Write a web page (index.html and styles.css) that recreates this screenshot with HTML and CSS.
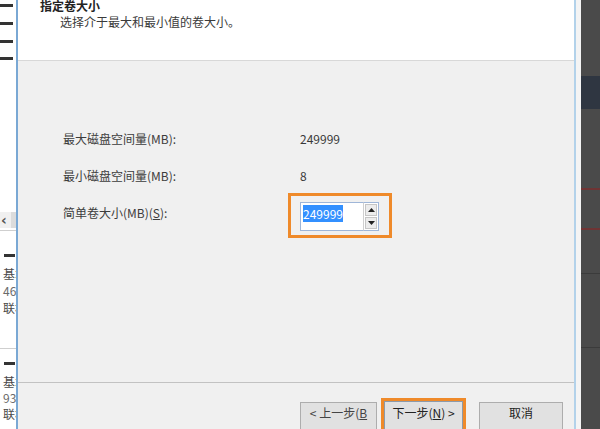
FILE: index.html
```html
<!DOCTYPE html>
<html lang="zh-CN">
<head>
<meta charset="utf-8">
<title>新建简单卷向导</title>
<link rel="stylesheet" href="styles.css">
</head>
<body>
<div class="side">
  <div class="dash d1"></div>
  <div class="dash d2"></div>
  <div class="dash d2"></div>
  <div class="dash d3"></div>
  <div class="scroll"><span class="lt">&lsaquo;</span><span class="thumb"></span></div>
  <div class="hsep s1"></div>
  <div class="dash d4"></div>
  <div class="disk disk1">
    <div>基本</div>
    <div class="num">465.76 GB</div>
    <div>联机</div>
  </div>
  <div class="hsep s2"></div>
  <div class="dash d5"></div>
  <div class="disk disk2">
    <div>基本</div>
    <div class="num">93.13 GB</div>
    <div>联机</div>
  </div>
</div>

<div class="dialog">
  <div class="header">
    <div class="title">指定卷大小</div>
    <div class="subtitle">选择介于最大和最小值的卷大小。</div>
  </div>
  <div class="body">
    <div class="row r1">
      <div class="label">最大磁盘空间量(MB):</div>
      <div class="value">249999</div>
    </div>
    <div class="row r2">
      <div class="label">最小磁盘空间量(MB):</div>
      <div class="value">8</div>
    </div>
    <div class="row r3">
      <div class="label l3">简单卷大小(MB)(<u>S</u>):</div>
      <div class="hl">
        <div class="field"><span class="sel">249999</span></div>
        <div class="spin">
          <div class="sbtn"><svg width="7" height="4" viewBox="0 0 7 4"><path d="M3.5 0 L7 4 L0 4 Z" fill="#222"/></svg></div>
          <div class="sbtn"><svg width="7" height="4" viewBox="0 0 7 4"><path d="M0 0 L7 0 L3.5 4 Z" fill="#222"/></svg></div>
        </div>
      </div>
    </div>
  </div>
  <div class="footer">
    <div class="btn prev">&lt; 上一步(<u>B</u></div>
    <div class="focusbox"><div class="btn next">下一步(<u>N</u>) &gt;</div></div>
    <div class="btn cancel">取消</div>
  </div>
</div>

<div class="gapstrip"></div>
<div class="dark">
  <div class="band"></div>
  <div class="red red1"></div>
  <div class="red red2"></div>
  <div class="gline g1"></div>
  <div class="gline g2"></div>
</div>
</body>
</html>
```

FILE: styles.css
```css
html, body {
  margin: 0;
  padding: 0;
}
body {
  width: 600px;
  height: 429px;
  overflow: hidden;
  display: flex;
  font-family: "Noto Sans CJK SC", "Noto Sans", sans-serif;
  font-size: 12px;
  color: #3a3a3a;
  background: #fff;
}

/* left background window */
.side {
  width: 16px;
  flex: none;
  display: flex;
  flex-direction: column;
  overflow: hidden;
  background: #fff;
}
.dash {
  height: 3px;
  width: 13px;
  background: #333;
  flex: none;
}
.d1 { margin-top: 4px; }
.d2 { margin-top: 15px; }
.d3 { margin-top: 14px; }
.scroll {
  margin-top: 152px;
  height: 16px;
  flex: none;
  background: #f0f0f0;
  display: flex;
  align-items: center;
}
.lt {
  font-family: "DejaVu Sans", sans-serif;
  font-size: 14px;
  font-weight: bold;
  color: #555;
  width: 10px;
  padding-left: 1px;
  line-height: 14px;
}
.thumb {
  width: 5px;
  height: 16px;
  background: #dcdcdc;
}
.d4 { margin-top: 23px; width: 11px; margin-left: 4px; }
.d5 { margin-top: 13px; width: 11px; margin-left: 4px; }
.disk {
  padding-left: 3px;
  white-space: nowrap;
  color: #4a4a4a;
}
.disk1 { margin-top: 8px; line-height: 17px; }
.disk2 { margin-top: 9px; line-height: 16px; }
.num { color: #6a6a6a; }
.hsep {
  height: 1px;
  background: #cfcfcf;
  flex: none;
}
.s1 { margin-top: 2px; }
.s2 { margin-top: 32px; }

/* dialog */
.dialog {
  width: 556px;
  flex: none;
  border-left: 2px solid #7aa8d4;
  border-right: 2px solid #b3d2ea;
  display: flex;
  flex-direction: column;
  background: #f0f0f0;
}
.header {
  height: 60px;
  flex: none;
  background: #fff;
  border-bottom: 1px solid #d8d8d8;
}
.title {
  margin-top: -2px;
  padding-left: 22px;
  line-height: 16px;
  font-weight: bold;
  color: #222;
}
.subtitle {
  padding-left: 42px;
  line-height: 16px;
  color: #3a3a3a;
}
.body {
  flex: 1;
  padding: 70px 0 0 45px;
}
.row {
  display: flex;
  align-items: flex-start;
  line-height: 16px;
}
.label {
  width: 237px;
  flex: none;
  color: #3c3c3c;
}
.value { color: #3a3a3a; }
.r2 { margin-top: 21px; }
.r3 { margin-top: 9px; }
.l3 { margin-top: 12px; }
.hl {
  margin-left: -12px;
  border: 3px solid #ef8a2a;
  padding: 6px 10px 4px 9px;
  display: flex;
}
.field {
  border: 1px solid #9fb6d8;
  border-right: none;
  background: #fff;
  padding: 3px 0 0 2px;
  box-sizing: border-box;
  width: 63px;
  height: 29px;
  line-height: 16px;
}
.sel {
  background: #3390ff;
  color: #fff;
}
.spin {
  width: 16px;
  height: 29px;
  border: 1px solid #9fb6d8;
  border-left: 1px solid #d0d0d0;
  box-sizing: border-box;
  background: #fff;
  display: flex;
  flex-direction: column;
  gap: 1px;
  padding: 1px;
}
.sbtn {
  flex: 1;
  background: #ececec;
  border: 1px solid #c6c6c6;
  display: flex;
  align-items: center;
  justify-content: center;
}

/* footer */
.footer {
  height: 46px;
  flex: none;
  border-top: 1px solid #c2c2c2;
  display: flex;
  justify-content: flex-end;
  align-items: flex-start;
  padding-right: 11px;
  overflow: hidden;
}
.btn {
  height: 28px;
  box-sizing: border-box;
  background: #e1e1e1;
  border: 1px solid #adadad;
  line-height: 20px;
  text-align: center;
  white-space: nowrap;
  color: #222;
  flex: none;
}
.prev {
  width: 77px;
  margin-top: 19px;
  color: #444;
}
.focusbox {
  margin: 15px 13px 0 4px;
  border: 3px solid #ef8a2a;
  flex: none;
}
.next {
  width: 79px;
  height: 30px;
  border-color: #8c9aaa;
  line-height: 22px;
}
.cancel {
  width: 84px;
  margin-top: 19px;
}

/* right background */
.gapstrip {
  width: 5px;
  flex: none;
  background: #f4f4f4;
}
.dark {
  flex: 1;
  background: #4a4a4a;
  display: flex;
  flex-direction: column;
}
.band {
  margin-top: 76px;
  height: 33px;
  background: #2f3641;
}
.red {
  height: 2px;
  background: #6f3434;
}
.red1 { margin-top: 79px; }
.red2 { margin-top: 38px; }
.gline {
  height: 1px;
  background: #3b3b3b;
}
.g1 { margin-top: 43px; }
.g2 { margin-top: 73px; }
```
